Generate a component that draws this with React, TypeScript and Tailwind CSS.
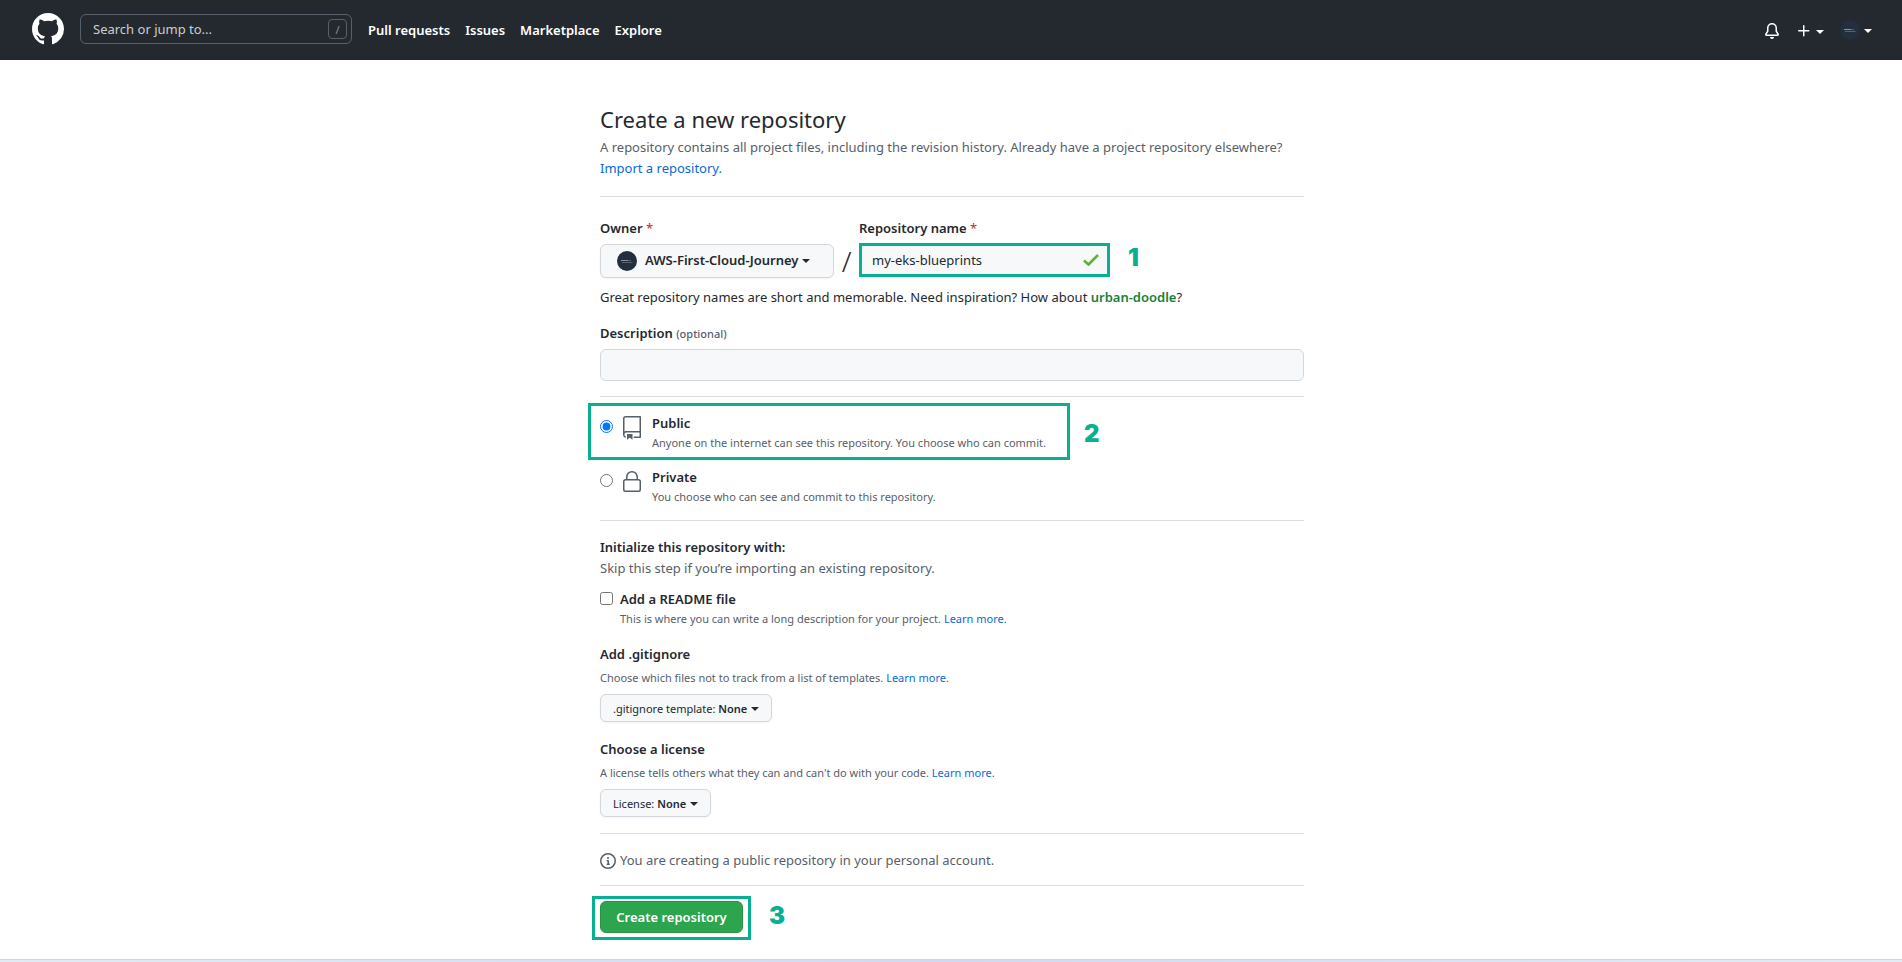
import React from "react";

function Caret({ className = "" }: { className?: string }) {
  return <span aria-hidden="true" className={`mt-0.5 inline-block border-x-4 border-t-4 border-x-transparent border-t-current ${className}`} />;
}

function Octicon({ size, paths, className = "" }: { size: 16 | 24; paths: string[]; className?: string }) {
  return (
    <svg aria-hidden="true" viewBox={`0 0 ${size} ${size}`} fill="currentColor" fillRule="evenodd" className={`shrink-0 ${className}`}>
      {paths.map((d) => (
        <path key={d} d={d} />
      ))}
    </svg>
  );
}

const MARK = [
  "M8 0C3.58 0 0 3.58 0 8c0 3.54 2.29 6.53 5.47 7.59.4.07.55-.17.55-.38 0-.19-.01-.82-.01-1.49-2.01.37-2.53-.49-2.69-.94-.09-.23-.48-.94-.82-1.13-.28-.15-.68-.52-.01-.53.63-.01 1.08.58 1.23.82.72 1.21 1.87.87 2.33.66.07-.52.28-.87.51-1.07-1.78-.2-3.64-.89-3.64-3.95 0-.87.31-1.59.82-2.15-.08-.2-.36-1.02.08-2.12 0 0 .67-.21 2.2.82.64-.18 1.32-.27 2-.27.68 0 1.36.09 2 .27 1.53-1.04 2.2-.82 2.2-.82.44 1.1.16 1.92.08 2.12.51.56.82 1.27.82 2.15 0 3.07-1.87 3.75-3.65 3.95.29.25.54.73.54 1.48 0 1.07-.01 1.93-.01 2.2 0 .21.15.46.55.38A8.013 8.013 0 0016 8c0-4.42-3.58-8-8-8z",
];
const BELL = [
  "M8 16a2 2 0 001.985-1.75c.017-.137-.097-.25-.235-.25h-3.5c-.138 0-.252.113-.235.25A2 2 0 008 16z",
  "M8 1.5A3.5 3.5 0 004.5 5v2.947c0 .346-.102.683-.294.97l-1.703 2.556a.018.018 0 00-.003.01l.001.006c0 .002.002.004.004.006a.017.017 0 00.006.004l.007.001h10.964l.007-.001a.016.016 0 00.006-.004.016.016 0 00.004-.006l.001-.007a.017.017 0 00-.003-.01l-1.703-2.554a1.75 1.75 0 01-.294-.97V5A3.5 3.5 0 008 1.5zM3 5a5 5 0 0110 0v2.947c0 .05.015.098.042.139l1.703 2.555A1.518 1.518 0 0113.482 13H2.518a1.518 1.518 0 01-1.263-2.36l1.703-2.554A.25.25 0 003 7.947V5z",
];
const PLUS = ["M7.75 2a.75.75 0 01.75.75V7h4.25a.75.75 0 110 1.5H8.5v4.25a.75.75 0 11-1.5 0V8.5H2.75a.75.75 0 010-1.5H7V2.75A.75.75 0 017.75 2z"];
const REPO = [
  "M3 2.75A2.75 2.75 0 015.75 0h14.5a.75.75 0 01.75.75v20.5a.75.75 0 01-.75.75h-6a.75.75 0 010-1.5h5.25v-4H6A1.5 1.5 0 004.5 18v.75c0 .716.43 1.334 1.05 1.605a.75.75 0 01-.6 1.374A3.25 3.25 0 013 18.75v-16zM19.5 1.5V15H6c-.546 0-1.059.146-1.5.401V2.75c0-.69.56-1.25 1.25-1.25H19.5z",
  "M7 18.25a.25.25 0 01.25-.25h5a.25.25 0 01.25.25v5.01a.25.25 0 01-.397.201l-2.206-1.604a.25.25 0 00-.294 0L7.397 23.46a.25.25 0 01-.397-.2v-5.01z",
];
const LOCK = [
  "M6 9V7.25C6 3.845 8.503 1 12 1s6 2.845 6 6.25V9h.5a2.5 2.5 0 012.5 2.5v8a2.5 2.5 0 01-2.5 2.5h-13A2.5 2.5 0 013 19.5v-8A2.5 2.5 0 015.5 9H6zm1.5-1.75C7.5 4.58 9.422 2.5 12 2.5c2.578 0 4.5 2.08 4.5 4.75V9h-9V7.25zm-3 4.25a1 1 0 011-1h13a1 1 0 011 1v8a1 1 0 01-1 1h-13a1 1 0 01-1-1v-8z",
];
const INFO = [
  "M8 1.5a6.5 6.5 0 100 13 6.5 6.5 0 000-13zM0 8a8 8 0 1116 0A8 8 0 010 8zm6.5-.25A.75.75 0 017.25 7h1a.75.75 0 01.75.75v2.75h.25a.75.75 0 010 1.5h-2a.75.75 0 010-1.5h.25v-2h-.25a.75.75 0 01-.75-.75zM8 6a1 1 0 100-2 1 1 0 000 2z",
];

function Avatar({ className = "" }: { className?: string }) {
  return (
    <svg aria-hidden="true" viewBox="0 0 20 20" className={`size-5 shrink-0 ${className}`}>
      <circle cx="10" cy="10" r="10" fill="#232f3e" />
      <path d="M4 9.5h7" stroke="#8b929b" strokeWidth="1" />
      <path d="M5 11.500h10.500" stroke="#66707d" strokeWidth="0.8" />
      <path d="M11 9.5h3" stroke="#8d7a66" strokeWidth="0.6" />
    </svg>
  );
}

function Step({ n, className = "" }: { n: number; className?: string }) {
  return <span className={`font-['Inter',sans-serif] text-2xl leading-6 font-black text-[#07b091] ${className}`}>{n}</span>;
}

function LearnMore() {
  return (
    <a href="#learn" className="text-[#0969da]">
      Learn more.
    </a>
  );
}

function Required() {
  return <span className="font-normal text-[#cf222e]">*</span>;
}

function Visibility({ id, title, note, icon, checked }: { id: string; title: string; note: string; icon: string[]; checked?: boolean }) {
  return (
    <div className="flex">
      <input type="radio" id={id} name="visibility" defaultChecked={checked} className="mt-1.5 size-[13px]" />
      <Octicon size={24} paths={icon} className="mt-0.5 ml-[7px] size-6 text-[#57606a]" />
      <label htmlFor={id} className="ml-2">
        <span className="block leading-[18px] font-semibold">{title}</span>
        <span className="block pt-0.5 text-[11px] leading-[18px] text-[#57606a]">{note}</span>
      </label>
    </div>
  );
}

function TemplateButton({ label }: { label: string }) {
  return (
    <button type="button" className="flex h-7 items-center rounded-md border border-[#d3d6da] bg-[#f6f8fa] px-3 text-[11px] shadow-xs">
      <span>
        {label}: <span className="font-semibold">None</span>
      </span>
      <Caret className="ml-1" />
    </button>
  );
}

const rule = "border-t border-[#d8dee4]";

export default function App() {
  return (
    <div className="flex min-h-screen flex-col bg-white font-['Noto_Sans','Open_Sans',sans-serif] text-[13px] leading-[21px] text-[#24292f]">
      <header className="flex h-[60px] items-center bg-[#24292f] pr-[30px] pl-8 text-white">
        <a href="#home" aria-label="Homepage" className="pb-0.5">
          <Octicon size={16} paths={MARK} className="size-8" />
        </a>
        <div className="mb-0.5 ml-4 flex h-[30px] w-[272px] items-center rounded-md border border-[#57606a] pr-1">
          <input aria-label="Search" placeholder="Search or jump to..." className="min-w-0 flex-1 bg-transparent px-3 outline-none placeholder:text-[#cbcdcf]" />
          <span className="flex h-5 w-[19px] items-center justify-center rounded-sm border border-[#57606a] text-[11px] text-[#8b949e]">/</span>
        </div>
        <nav className="ml-4 flex gap-[15px] font-semibold">
          <a href="#pulls">Pull requests</a>
          <a href="#issues">Issues</a>
          <a href="#marketplace">Marketplace</a>
          <a href="#explore">Explore</a>
        </nav>
        <div className="ml-auto flex items-center">
          <button type="button" aria-label="Notifications" className="pt-0.5">
            <Octicon size={16} paths={BELL} className="size-4" />
          </button>
          <button type="button" aria-label="Create new" className="ml-4 flex items-center pt-0.5">
            <Octicon size={16} paths={PLUS} className="size-4" />
            <Caret className="ml-1" />
          </button>
          <button type="button" aria-label="Account" className="ml-4 flex items-center">
            <Avatar />
            <Caret className="ml-1" />
          </button>
        </div>
      </header>

      <main className="mx-auto w-full max-w-[706px] flex-1 pt-[41px] pl-0.5">
        <h1 className="text-[22px] leading-9">Create a new repository</h1>
        <p className="text-[#57606a]">
          A repository contains all project files, including the revision history. Already have a project repository elsewhere?
          <br />
          <a href="#import" className="text-[#0969da]">
            Import a repository.
          </a>
        </p>

        <form onSubmit={(e) => e.preventDefault()}>
          <section className={`mt-[17px] pt-[21px] ${rule}`}>
            <div className="flex items-end">
              <div>
                <div id="owner" className="mb-[5px] font-semibold">
                  Owner <Required />
                </div>
                <button type="button" aria-labelledby="owner" className="flex h-[34px] w-[234px] items-center rounded-md border border-[#d3d6da] bg-[#f6f8fa] px-4 pb-0.5 font-semibold shadow-xs">
                  <Avatar className="mt-0.5" />
                  <span className="ml-2">AWS-First-Cloud-Journey</span>
                  <Caret className="ml-1" />
                </button>
              </div>
              <span className="w-[25px] text-center text-[28px] leading-[34px] font-light">/</span>
              <div className="pb-px">
                <label htmlFor="name" className="mb-1 block font-semibold">
                  Repository name <Required />
                </label>
                <div className="flex items-center">
                  <div className="flex h-[34px] w-[251px] items-center border-3 border-[#07b091] bg-[#f6f8fa] pr-2">
                    <input id="name" defaultValue="my-eks-blueprints" className="min-w-0 flex-1 bg-transparent px-[10px] outline-none" />
                    <svg aria-hidden="true" viewBox="0 0 16 12" className="h-3 w-4">
                      <path d="M1 6.5l4.5 4L15 1" fill="none" stroke="#5bb32f" strokeWidth="2.6" />
                    </svg>
                  </div>
                  <Step n={1} className="ml-[18px] pb-1" />
                </div>
              </div>
            </div>
            <p className="mt-[9px]">
              Great repository names are short and memorable. Need inspiration? How about{" "}
              <button type="button" className="font-semibold text-[#1a7f37]">
                urban-doodle
              </button>
              ?
            </p>
            <label htmlFor="description" className="mt-[15px] block font-semibold">
              Description <span className="text-[11px] font-medium text-[#57606a]">(optional)</span>
            </label>
            <input id="description" className="mt-[5px] block h-8 w-full rounded-md border border-[#d0d7de] bg-[#f6f8fa] px-3 outline-none" />
          </section>

          <section className={`mt-[15px] pt-1.5 ${rule}`}>
            <div className="-ml-3 flex items-center">
              <div className="w-[482px] border-3 border-[#07b091] px-[9px] pt-2 pb-[5px]">
                <Visibility id="public" title="Public" note="Anyone on the internet can see this repository. You choose who can commit." icon={REPO} checked />
              </div>
              <Step n={2} className="ml-[14px] pt-1" />
            </div>
            <div className="mt-2">
              <Visibility id="private" title="Private" note="You choose who can see and commit to this repository." icon={LOCK} />
            </div>
          </section>

          <section className={`mt-[14px] pt-4 ${rule}`}>
            <h2 className="font-semibold">Initialize this repository with:</h2>
            <p className="text-[#57606a]">Skip this step if you’re importing an existing repository.</p>
            <div className="mt-[10px] flex gap-[7px]">
              <input id="readme" type="checkbox" className="mt-[3px] size-[13px]" />
              <div>
                <label htmlFor="readme" className="block font-semibold">
                  Add a README file
                </label>
                <p className="text-[11px] leading-[18px] text-[#57606a]">
                  This is where you can write a long description for your project. <LearnMore />
                </p>
              </div>
            </div>

            <h2 className="mt-4 font-semibold">Add .gitignore</h2>
            <p className="mt-1 mb-[7px] text-[11px] leading-[18px] text-[#57606a]">
              Choose which files not to track from a list of templates. <LearnMore />
            </p>
            <TemplateButton label=".gitignore template" />

            <h2 className="mt-[17px] font-semibold">Choose a license</h2>
            <p className="mt-1 mb-[7px] text-[11px] leading-[18px] text-[#57606a]">
              A license tells others what they can and can't do with your code. <LearnMore />
            </p>
            <TemplateButton label="License" />
          </section>

          <p className={`mt-4 flex items-center gap-1 pt-4 pb-[14px] text-[#57606a] ${rule}`}>
            <Octicon size={16} paths={INFO} className="size-4" />
            You are creating a public repository in your personal account.
          </p>

          <div className={`pt-[10px] ${rule}`}>
            <div className="-ml-2 flex items-center">
              <div className="border-3 border-[#07b091] px-[5px] pt-0.5 pb-1">
                <button type="submit" className="block h-8 w-[143px] rounded-md border border-[#2a9147] bg-[#2da44e] font-semibold text-white">
                  Create repository
                </button>
              </div>
              <Step n={3} className="ml-[18px] pb-1" />
            </div>
          </div>
        </form>
      </main>
      <footer className="h-[3px] border-t border-[#cdd5dd] bg-linear-to-r from-[#dfecf6] via-[#cfdaf2] to-[#e0edf7]" />
    </div>
  );
}
